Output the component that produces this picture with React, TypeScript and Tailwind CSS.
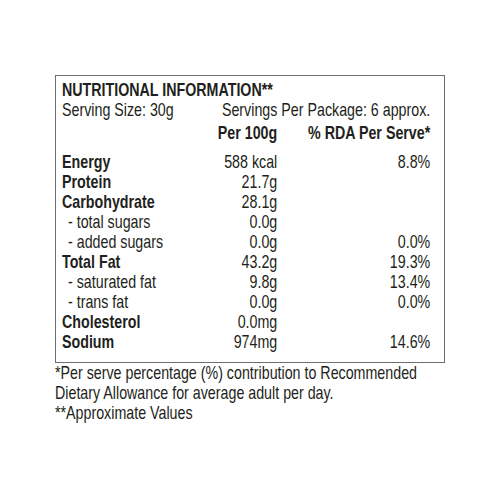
import React from "react";

type Row = { label: string; value: string; rda?: string; bold?: boolean };

const rows: Row[] = [
  { label: "Energy", value: "588 kcal", rda: "8.8%", bold: true },
  { label: "Protein", value: "21.7g", bold: true },
  { label: "Carbohydrate", value: "28.1g", bold: true },
  { label: "- total sugars", value: "0.0g" },
  { label: "- added sugars", value: "0.0g", rda: "0.0%" },
  { label: "Total Fat", value: "43.2g", rda: "19.3%", bold: true },
  { label: "- saturated fat", value: "9.8g", rda: "13.4%" },
  { label: "- trans fat", value: "0.0g", rda: "0.0%" },
  { label: "Cholesterol", value: "0.0mg", bold: true },
  { label: "Sodium", value: "974mg", rda: "14.6%", bold: true },
];

// the label uses a condensed face; we squeeze Liberation Sans horizontally
function App() {
  return (
    <div
      className="h-[500px] w-[500px] overflow-hidden bg-white pl-[55px] pt-[75px] text-[19px] leading-[20px] text-[#231f20]"
      style={{ fontFamily: '"Liberation Sans", Arial, sans-serif' }}
    >
      <div className="w-[390px] border border-[#6e6e6e] pb-[10px] pl-[6px] pt-[4px]">
        <div className="w-[491px] origin-top-left scale-x-[0.75] whitespace-nowrap">
          <div className="font-bold">NUTRITIONAL INFORMATION**</div>
          <div className="flex justify-between">
            <span>Serving Size: 30g</span>
            <span>Servings Per Package: 6 approx.</span>
          </div>
          <div className="mt-[3px] grid grid-cols-[192px_95px_204px] font-bold">
            <span />
            <span className="text-right">Per 100g</span>
            <span className="text-right">% RDA Per Serve*</span>
          </div>
          <div className="mt-[9px] grid grid-cols-[192px_95px_204px]">
            {rows.map((r) => (
              <React.Fragment key={r.label}>
                <span className={r.bold ? "font-bold" : "pl-[8px]"}>{r.label}</span>
                <span className="text-right">{r.value}</span>
                <span className="text-right">{r.rda ?? ""}</span>
              </React.Fragment>
            ))}
          </div>
        </div>
      </div>
      <div className="w-[560px] origin-top-left scale-x-[0.75] whitespace-nowrap">
        <p>*Per serve percentage (%) contribution to Recommended</p>
        <p>Dietary Allowance for average adult per day.</p>
        <p>**Approximate Values</p>
      </div>
    </div>
  );
}

export default App;
